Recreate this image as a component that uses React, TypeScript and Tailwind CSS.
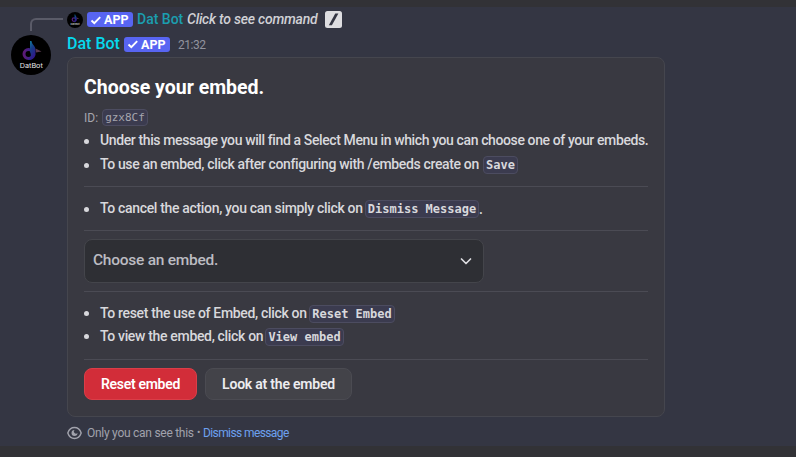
import type { ReactNode } from 'react';

function AppBadge() {
  return (
    <span className="flex h-[15px] w-[46px] shrink-0 items-center rounded-[3px] bg-[#5865f2] pl-[3px] text-white">
      <svg className="size-[12px] shrink-0" viewBox="0 0 12 12" fill="none">
        <path d="M1.5 6.5 4.3 9.2 10.2 3.2" stroke="currentColor" strokeWidth="1.9" />
      </svg>
      <span className="ml-[2px] text-[12.500px] font-bold leading-[15px]">APP</span>
    </span>
  );
}

function Avatar({ className }: { className: string }) {
  return (
    <svg className={className} viewBox="0 0 40 40">
      <defs>
        <linearGradient id="note" x1="0" y1="0" x2="0.5" y2="1">
          <stop offset="0" stopColor="#128aa0" />
          <stop offset="0.5" stopColor="#163c88" />
          <stop offset="1" stopColor="#31178a" />
        </linearGradient>
        <linearGradient id="ring" x1="0" y1="0" x2="1" y2="0">
          <stop offset="0" stopColor="#5c1a78" />
          <stop offset="1" stopColor="#2a2590" />
        </linearGradient>
      </defs>
      <circle cx="20" cy="20" r="20" fill="#000" />
      <ellipse cx="17.500" cy="19" rx="4.500" ry="4.500" fill="none" stroke="url(#ring)" strokeWidth="3" />
      <path d="M19 6 L20.500 6 C21 10 24.500 10.500 24.500 15 L24.500 20 C23.500 24 20 25.500 17 25 C20 23 20.500 20 19 17 Z" fill="url(#note)" />
      <path d="M24.500 13.500 L30.500 16.500 L25 17.500 Z" fill="#59384f" />
      <text x="20.300" y="33" textAnchor="middle" textLength="23" lengthAdjust="spacingAndGlyphs" fontSize="6.500" fontFamily="Inter, sans-serif" fill="#e8e8e8">DatBot</text>
    </svg>
  );
}

function Code({ children, className }: { children: ReactNode; className: string }) {
  return (
    <code className={`inline-flex shrink-0 items-center justify-center whitespace-pre rounded-[4px] border border-[#4c4c60] bg-[#3b3b4f] font-["DejaVu_Sans_Mono",monospace] ${className}`}>
      {children}
    </code>
  );
}

function Bullet({ children, className = '' }: { children: ReactNode; className?: string }) {
  return (
    <li className={`flex items-center whitespace-nowrap text-[14px] font-medium text-[#d8d8dc] ${className}`}>
      <span className="mr-[11px] size-[5px] shrink-0 rounded-full bg-[#d8d8dc]" />
      {children}
    </li>
  );
}

function Divider() {
  return <div className="h-px w-[564px] shrink-0 bg-[#4b4b54]" />;
}

export default function App() {
  return (
    <div className="flex h-[457px] w-[796px] flex-col overflow-hidden bg-[#323236] py-[7px] font-[Roboto,sans-serif]">
      <div className="flex h-[439px] shrink-0 bg-[#343643]">
        <div className="w-[67px] shrink-0 pt-[11px]">
          <div className="ml-[30px] h-[13px] w-[33px] rounded-tl-[6px] border-l-2 border-t-2 border-[#5a5b68]" />
          <Avatar className="ml-[11px] mt-[4px] size-[40px]" />
        </div>
        <div className="flex flex-col">
          <div className="mt-[4px] flex h-[17px] items-center whitespace-nowrap text-[14px]">
            <Avatar className="mr-[4px] size-[16px]" />
            <AppBadge />
            <span className="ml-[4px] w-[50px] font-medium text-[#1b9eaf]">Dat Bot</span>
            <span className="w-[138px] font-medium italic tracking-[-0.22px] text-[#d0d0d5]">Click to see command</span>
            <svg className="size-[17px]" viewBox="0 0 17 17">
              <rect width="17" height="17" rx="2.500" fill="#dedee1" />
              <path d="M10.300 2.500h3.100L6.900 14.200H3.800Z" fill="#343643" />
            </svg>
          </div>
          <div className="mt-[8px] flex h-[16px] items-center whitespace-nowrap">
            <span className="w-[57px] text-[16px] font-medium leading-[16px] text-[#06d9ee]">Dat Bot</span>
            <AppBadge />
            <span className="ml-[8px] pt-[2px] text-[12px] tracking-[-0.5px] text-[#92939e]">21:32</span>
          </div>
          <section className="mt-[5px] flex h-[360px] w-[598px] flex-col rounded-lg border border-[#45464e] bg-[#393941] pl-[16px]">
            <h1 className="mt-[16px] h-[28px] whitespace-nowrap text-[19.500px] font-bold leading-[28px] text-white">Choose your embed.</h1>
            <div className="mt-[7px] flex h-[17px] items-center text-[12px] text-[#a6a6ae]">
              <span className="w-[18px]">ID:</span>
              <Code className="h-[17px] w-[46px] pt-[2px] text-[11px]">gzx8Cf</Code>
            </div>
            <ul className="mt-[3px]">
              <Bullet className="h-[24px]"><span className="pb-[2px] tracking-[-0.385px]">Under this message you will find a Select Menu in which you can choose one of your embeds.</span></Bullet>
              <Bullet className="h-[24px]"><span className="w-[383px] pb-[2px] tracking-[-0.36px]">To use an embed, click after configuring with /embeds create on</span><Code className="h-[18px] w-[35px] text-[12px] font-bold">Save</Code></Bullet>
            </ul>
            <div className="h-[9px]" />
            <Divider />
            <ul className="mt-[10px]">
              <Bullet className="h-[24px]"><span className="w-[265px] pb-[1px] tracking-[-0.33px]">To cancel the action, you can simply click on</span><Code className="h-[18px] w-[114px] text-[12px] font-bold">Dismiss Message</Code>.</Bullet>
            </ul>
            <div className="h-[9px]" />
            <Divider />
            <button className="mt-[8px] flex h-[44px] w-[400px] shrink-0 items-center justify-between rounded-lg border border-[#44454b] bg-[#2e2f34] pl-[8px] pr-[9px] text-[15.500px] font-medium tracking-[-0.25px] text-[#bcbcc2]">
              <span>Choose an embed.</span>
              <svg className="size-[16px]" viewBox="0 0 16 16" fill="none"><path d="m3.500 6 4.500 4.500L12.500 6" stroke="#dcdce0" strokeWidth="1.700" strokeLinecap="round" strokeLinejoin="round" /></svg>
            </button>
            <div className="h-[8px]" />
            <Divider />
            <ul className="mt-[10px]">
              <Bullet className="h-[23px]"><span className="w-[209px] tracking-[-0.33px]">To reset the use of Embed, click on</span><Code className="h-[18px] w-[86px] text-[12px] font-bold">Reset Embed</Code></Bullet>
              <Bullet className="h-[23px]"><span className="w-[165px] tracking-[-0.33px]">To view the embed, click on</span><Code className="h-[18px] w-[79px] text-[12px] font-bold">View embed</Code></Bullet>
            </ul>
            <div className="h-[11px]" />
            <Divider />
            <div className="mt-[8px] flex gap-2 whitespace-nowrap text-[14px] font-semibold">
              <button className="h-[32px] w-[113px] rounded-lg border border-[#db3e48] bg-[#d22d39] tracking-[-0.3px] text-white">Reset embed</button>
              <button className="h-[32px] w-[147px] rounded-lg border border-[#4b4b52] bg-[#434349] tracking-[-0.22px] text-[#ececef]">Look at the embed</button>
            </div>
          </section>
          <div className="mt-[7px] flex h-[17px] items-center whitespace-nowrap text-[12px] text-[#a1a2ac]">
            <svg className="mr-[5px] h-[14px] w-[15px]" viewBox="0 0 15 14" fill="none">
              <path d="M.8 7C2 3.500 4.500 1.500 7.500 1.500S13 3.500 14.200 7C13 10.500 10.500 12.500 7.500 12.500S2 10.500.8 7Z" stroke="currentColor" strokeWidth="1.400" />
              <path d="M7.500 4A3 3 0 1 0 10.500 7 1.700 1.700 0 0 1 7.500 4Z" fill="currentColor" />
            </svg>
            <span className="w-[110px] tracking-[-0.27px]">Only you can see this</span>
            <span className="w-[6px] text-[10px]">•</span>
            <a className="tracking-[-0.6px] text-[#6da1ef]">Dismiss message</a>
          </div>
        </div>
      </div>
    </div>
  );
}
